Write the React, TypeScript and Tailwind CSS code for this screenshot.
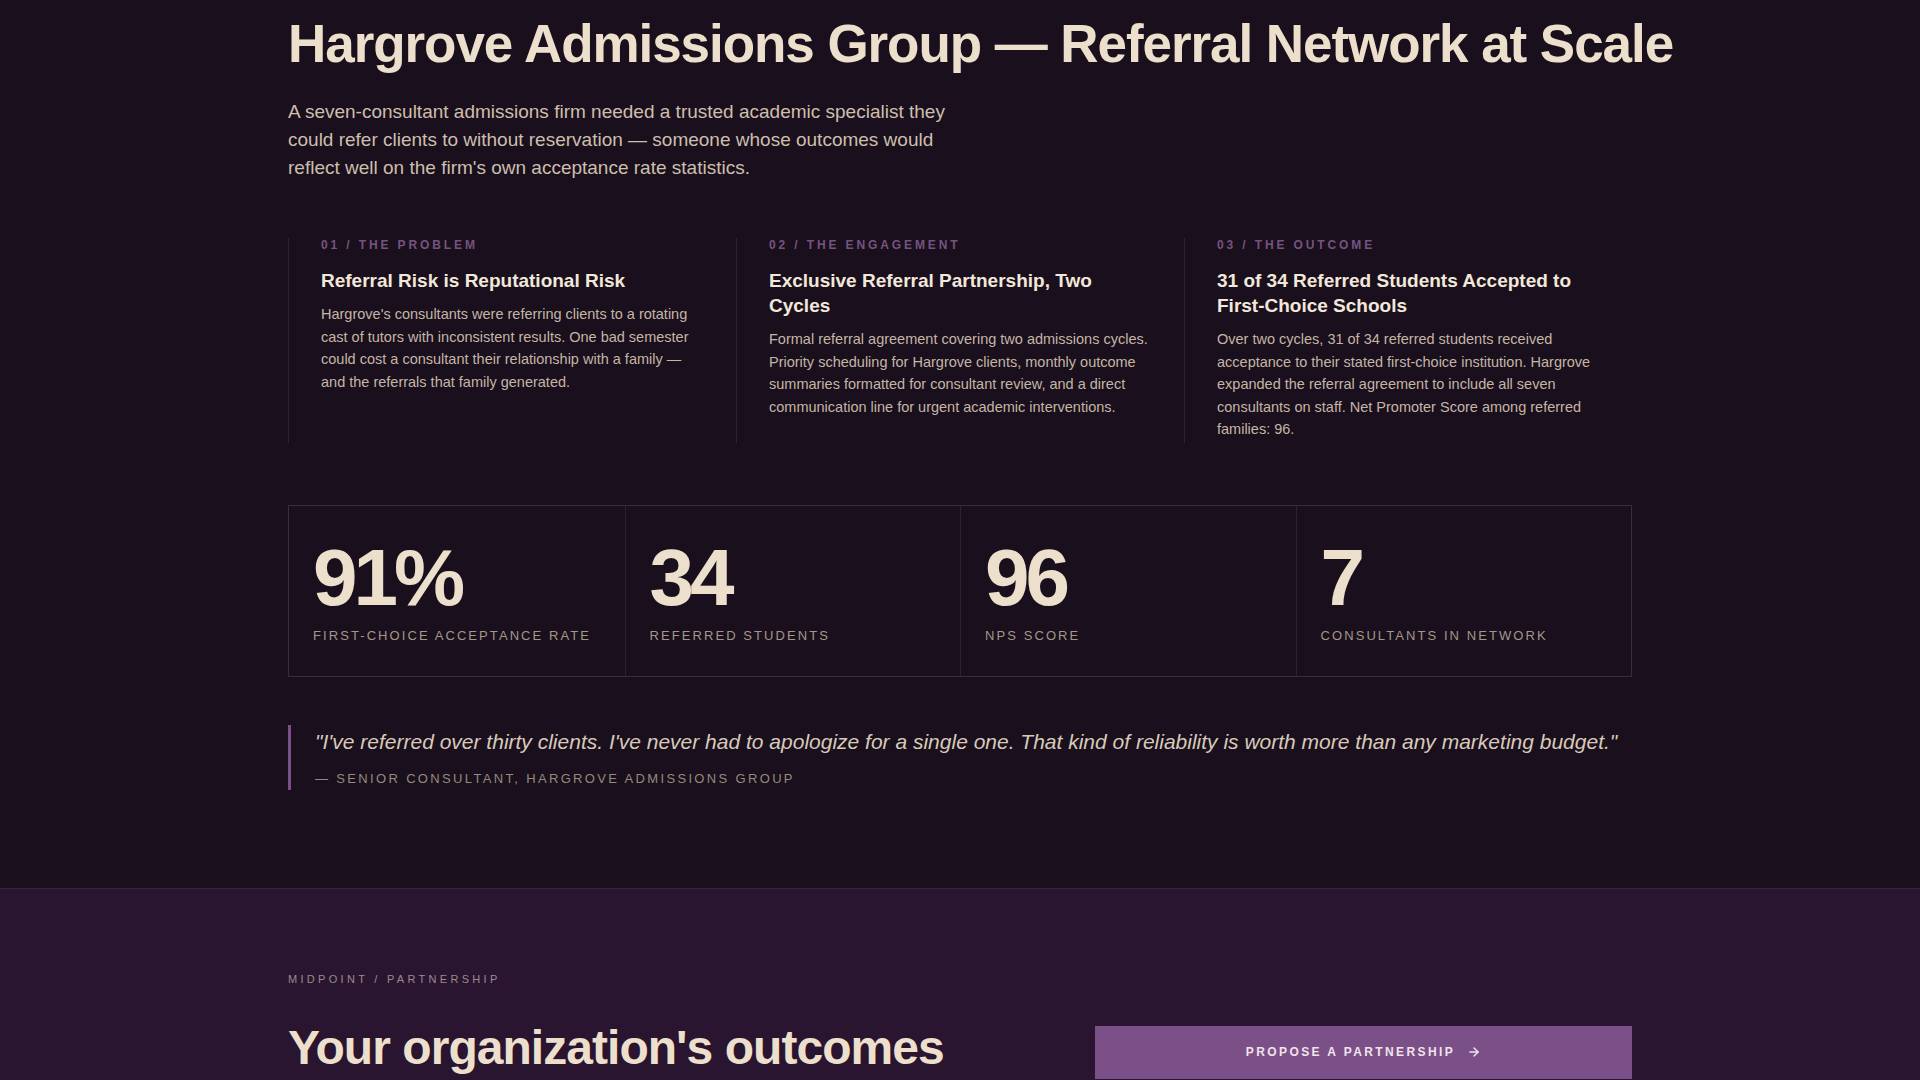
import React from 'react';
import { ArrowRight } from 'lucide-react';

const columns = [
  {
    label: '01 / The Problem',
    title: 'Referral Risk is Reputational Risk',
    body: "Hargrove's consultants were referring clients to a rotating cast of tutors with inconsistent results. One bad semester could cost a consultant their relationship with a family — and the referrals that family generated.",
  },
  {
    label: '02 / The Engagement',
    title: 'Exclusive Referral Partnership, Two Cycles',
    body: 'Formal referral agreement covering two admissions cycles. Priority scheduling for Hargrove clients, monthly outcome summaries formatted for consultant review, and a direct communication line for urgent academic interventions.',
  },
  {
    label: '03 / The Outcome',
    title: '31 of 34 Referred Students Accepted to First-Choice Schools',
    body: 'Over two cycles, 31 of 34 referred students received acceptance to their stated first-choice institution. Hargrove expanded the referral agreement to include all seven consultants on staff. Net Promoter Score among referred families: 96.',
  },
];

const stats = [
  { value: '91%', label: 'First-Choice Acceptance Rate' },
  { value: '34', label: 'Referred Students' },
  { value: '96', label: 'NPS Score' },
  { value: '7', label: 'Consultants in Network' },
];

export default function App() {
  return (
    <div className="h-[1080px] overflow-hidden bg-[#1a0f1d] text-[#ecdfcc] font-[Liberation_Sans,Arial,sans-serif]">
      <section className="w-[1344px] mx-auto pt-[14px] pb-[98px]">
        <h1 className="text-[53px] font-bold tracking-[-0.02em] leading-[60px] text-[#ecdfcc] whitespace-nowrap">
          Hargrove Admissions Group — Referral Network at Scale
        </h1>
        <p className="mt-[24px] max-w-[680px] text-[19px] leading-[28px] text-[#cdbfae]">
          A seven-consultant admissions firm needed a trusted academic specialist they could refer clients to without reservation — someone whose outcomes would reflect well on the firm's own acceptance rate statistics.
        </p>

        <div className="mt-[56px] grid grid-cols-3">
          {columns.map((c) => (
            <div key={c.label} className="border-l border-[#2e2232] pl-[32px] pr-[32px] pb-[2px] min-h-[202px]">
              <div className="text-[12px] font-bold tracking-[0.24em] uppercase text-[#76537f] leading-[14px]">{c.label}</div>
              <h3 className="mt-[16px] text-[19px] font-bold leading-[25px] text-[#f2e8da]">{c.title}</h3>
              <p className="mt-[10px] text-[14.5px] leading-[22.5px] text-[#c4b6a6]">{c.body}</p>
            </div>
          ))}
        </div>

        <div className="mt-[62px] grid grid-cols-4 border border-[#3a2c3e]">
          {stats.map((s, i) => (
            <div key={s.label} className={i > 0 ? 'px-[24px] pt-[30px] pb-[32px] border-l border-[#2e2232]' : 'px-[24px] pt-[30px] pb-[32px]'}>
              <div className="text-[80px] font-bold tracking-[-0.05em] leading-[84px] text-[#ecdfcc]">{s.value}</div>
              <div className="mt-[8px] text-[13px] leading-[16px] tracking-[0.16em] uppercase text-[#a39888]">{s.label}</div>
            </div>
          ))}
        </div>

        <blockquote className="mt-[48px] border-l-[3px] border-[#7b5088] pl-[24px] py-[2px]">
          <p className="italic text-[21px] leading-[30px] text-[#d8cab8]">
            "I've referred over thirty clients. I've never had to apologize for a single one. That kind of reliability is worth more than any marketing budget."
          </p>
          <div className="mt-[12px] text-[13px] tracking-[0.18em] uppercase text-[#958a7c]">
            — Senior Consultant, Hargrove Admissions Group
          </div>
        </blockquote>
      </section>

      <section className="bg-[#2a1530] border-t border-[#3a2440] h-[300px]">
        <div className="w-[1344px] mx-auto pt-[82px]">
          <div className="text-[11px] tracking-[0.3em] uppercase text-[#9a8a8e]">Midpoint / Partnership</div>
          <div className="mt-[30px] grid grid-cols-[1fr_537px] gap-[80px]">
            <h2 className="text-[48px] font-bold tracking-[-0.02em] leading-[60px] text-[#ecdfcc]">
              Your organization's outcomes <span className="text-[#8e63a0]">become part of the record.</span>
            </h2>
            <div className="pt-[8px]">
              <button className="w-full h-[53px] bg-[#7b5088] flex items-center justify-center gap-[12px] text-[12px] font-bold tracking-[0.2em] uppercase text-[#f2e4ea]">
                Propose a Partnership
                <ArrowRight size={14} strokeWidth={2.5} />
              </button>
              <div className="mt-[12px] h-[53px] border border-[#6a4876]" />
            </div>
          </div>
        </div>
      </section>
    </div>
  );
}
